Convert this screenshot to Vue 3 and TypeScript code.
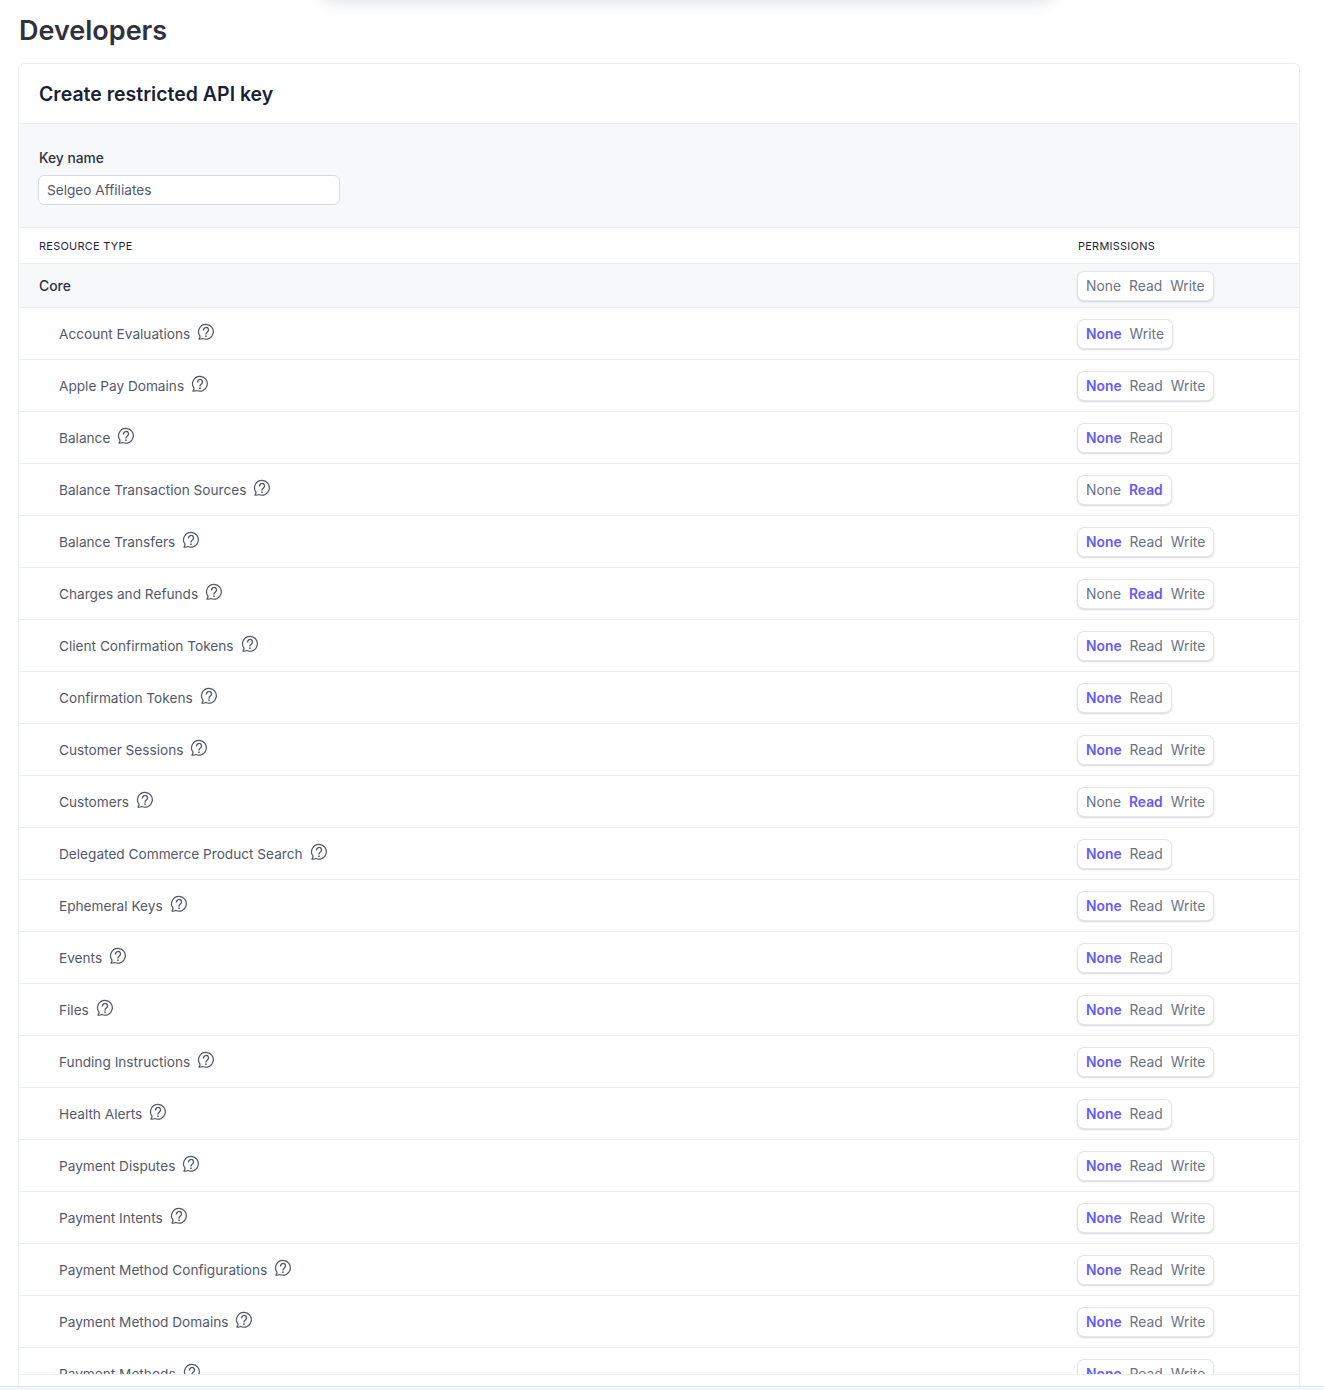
<script setup lang="ts">
type Level = 'None' | 'Read' | 'Write'

interface Resource {
  name: string
  options: Level[]
  selected: Level
}

const all: Level[] = ['None', 'Read', 'Write']
const noWrite: Level[] = ['None', 'Read']

const resources: Resource[] = [
  { name: 'Account Evaluations', options: ['None', 'Write'], selected: 'None' },
  { name: 'Apple Pay Domains', options: all, selected: 'None' },
  { name: 'Balance', options: noWrite, selected: 'None' },
  { name: 'Balance Transaction Sources', options: noWrite, selected: 'Read' },
  { name: 'Balance Transfers', options: all, selected: 'None' },
  { name: 'Charges and Refunds', options: all, selected: 'Read' },
  { name: 'Client Confirmation Tokens', options: all, selected: 'None' },
  { name: 'Confirmation Tokens', options: noWrite, selected: 'None' },
  { name: 'Customer Sessions', options: all, selected: 'None' },
  { name: 'Customers', options: all, selected: 'Read' },
  { name: 'Delegated Commerce Product Search', options: noWrite, selected: 'None' },
  { name: 'Ephemeral Keys', options: all, selected: 'None' },
  { name: 'Events', options: noWrite, selected: 'None' },
  { name: 'Files', options: all, selected: 'None' },
  { name: 'Funding Instructions', options: all, selected: 'None' },
  { name: 'Health Alerts', options: noWrite, selected: 'None' },
  { name: 'Payment Disputes', options: all, selected: 'None' },
  { name: 'Payment Intents', options: all, selected: 'None' },
  { name: 'Payment Method Configurations', options: all, selected: 'None' },
  { name: 'Payment Method Domains', options: all, selected: 'None' },
  { name: 'Payment Methods', options: all, selected: 'None' },
]
</script>

<template>
  <div class="page">
    <div class="top-shadow"></div>
    <h1 class="title">Developers</h1>
    <section class="card">
      <header class="card-head">
        <h2>Create restricted API key</h2>
      </header>
      <div class="key-section">
        <label class="key-label" for="key-name">Key name</label>
        <input id="key-name" class="key-input" type="text" value="Selgeo Affiliates" />
      </div>
      <div class="table-clip">
        <div class="row head-row">
          <span>RESOURCE TYPE</span>
          <span class="perm-col">PERMISSIONS</span>
        </div>
        <div class="row group-row">
          <span>Core</span>
          <div class="perm-col">
            <div class="segment">
              <span v-for="opt in all" :key="opt" class="seg-opt">{{ opt }}</span>
            </div>
          </div>
        </div>
        <div v-for="res in resources" :key="res.name" class="row item-row">
          <div class="item-name">
            <span>{{ res.name }}</span>
            <svg class="help" width="18" height="18" viewBox="0 0 18 18" fill="none">
              <path d="M9 1.4a7.4 7.4 0 1 1-3.2 14.1c-1 .5-2.2.8-3.5.6-.3 0-.4-.3-.2-.5.6-.6.9-1.4.9-2.4A7.4 7.4 0 0 1 9 1.4Z" stroke="currentColor" stroke-width="1.25" stroke-linejoin="round" />
              <path d="M6.5 6.9a2.5 2.5 0 1 1 3.9 2.1c-.9.6-1.4 1-1.4 2" stroke="currentColor" stroke-width="1.4" stroke-linecap="round" />
              <circle cx="9" cy="13.2" r=".85" fill="currentColor" />
            </svg>
          </div>
          <div class="perm-col">
            <div class="segment">
              <span
                v-for="opt in res.options"
                :key="opt"
                class="seg-opt"
                :class="{ 'seg-opt--on': opt === res.selected }"
              >{{ opt }}</span>
            </div>
          </div>
        </div>
      </div>
      <div class="card-foot"></div>
    </section>
    <div class="bottom-strip"></div>
  </div>
</template>

<style>
html, body {
  margin: 0;
  background: #fff;
}
</style>

<style scoped>
.page {
  position: relative;
  display: flex;
  flex-direction: column;
  height: 1390px;
  overflow: hidden;
  background: #fff;
  font-family: Inter, "Liberation Sans", sans-serif;
  color: #3c4257;
  box-sizing: border-box;
}

.top-shadow {
  position: absolute;
  left: 322px;
  top: -40px;
  width: 730px;
  height: 40px;
  border-radius: 8px;
  box-shadow: 0 3px 14px rgba(60, 66, 87, 0.14);
}

.title {
  margin: 14px 0 0 19px;
  height: 49px;
  font-size: 27px;
  line-height: 34px;
  font-weight: 600;
  color: #30313d;
}

.card {
  flex: 1;
  min-height: 0;
  display: flex;
  flex-direction: column;
  margin: 0 24px 0 18px;
  border: 1px solid #ebeef1;
  border-bottom: 0;
  border-radius: 6px 6px 0 0;
  overflow: hidden;
}

.card-head {
  height: 59px;
  display: flex;
  align-items: center;
  padding: 0 20px;
  border-bottom: 1px solid #ebeef1;
}

.card-head h2 {
  margin: 0;
  font-size: 19.5px;
  line-height: 28px;
  font-weight: 600;
  color: #1a1f36;
}

.key-section {
  height: 104px;
  box-sizing: border-box;
  padding: 25px 20px 0 19px;
  background: #f6f8fa;
  border-bottom: 1px solid #ebeef1;
}

.key-label {
  display: block;
  margin: 0 0 8px 1px;
  font-size: 13.8px;
  line-height: 18px;
  font-weight: 500;
  color: #30313d;
}

.key-input {
  display: block;
  width: 302px;
  height: 30px;
  box-sizing: border-box;
  padding: 0 8px;
  border: 1px solid #d5dbe1;
  border-radius: 6px;
  background: #fff;
  font: 400 13.65px Inter, "Liberation Sans", sans-serif;
  color: #545969;
}

.table-clip {
  flex: 1;
  min-height: 0;
  overflow: hidden;
}

.row {
  display: flex;
  align-items: center;
  justify-content: space-between;
  box-sizing: border-box;
  padding-left: 20px;
  border-bottom: 1px solid #ebeef1;
}

.perm-col {
  width: 221px;
  flex: none;
}

.head-row {
  height: 36px;
  font-size: 10.9px;
  font-weight: 400;
  letter-spacing: 0.3px;
  color: #1a1f36;
}

.group-row {
  height: 44px;
  background: #f6f8fa;
  font-size: 13.9px;
  font-weight: 500;
  color: #30313d;
}

.item-row {
  height: 52px;
  padding-left: 40px;
  font-size: 13.65px;
  color: #545969;
}

.item-name {
  display: flex;
  align-items: center;
  gap: 7px;
}

.help {
  color: #545969;
  margin-top: -4px;
}

.segment {
  display: inline-flex;
  gap: 8px;
  height: 28px;
  box-sizing: border-box;
  align-items: center;
  padding: 0 8px;
  border-radius: 6px;
  background: #fff;
  box-shadow: 0 0 0 1px #e3e5e9, 0 1px 2px 1px rgba(60, 66, 87, 0.2);
  font-size: 13.85px;
  font-weight: 400;
}

.seg-opt {
  color: #6a7383;
}

.seg-opt--on {
  color: #635bff;
  font-weight: 600;
}

.card-foot {
  height: 12px;
  flex: none;
  border-top: 1px solid #ebeef1;
  box-sizing: border-box;
  background: #fff;
}

.bottom-strip {
  height: 4px;
  flex: none;
  background: #f2f6fb;
  border-top: 1px solid #dfe6ef;
  box-sizing: border-box;
}
</style>
